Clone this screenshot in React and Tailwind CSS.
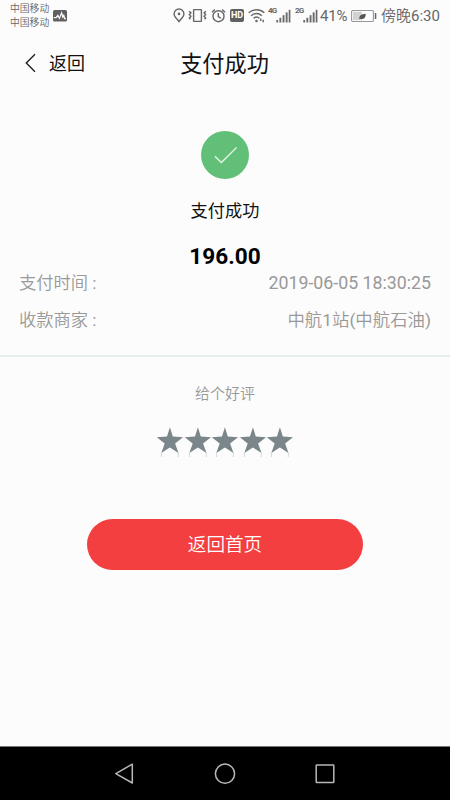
const details = [
  { label: '支付时间', value: '2019-06-05 18:30:25', size: 'text-[17.75px]' },
  { label: '收款商家', value: '中航1站(中航石油)', size: 'text-[17.4px]' },
]

// Chinese glyphs are set lighter than the digits around them
function MixedText({ text }) {
  return text.split(/([\u4e00-\u9fff]+)/).map((part, i) => (
    <span key={i} className={i % 2 ? 'font-[350]' : 'font-normal'}>
      {part}
    </span>
  ))
}

function SignalBars() {
  return (
    <svg className="w-[15px] h-[14px]" viewBox="0 0 15 14" fill="#6a6a6a">
      <rect x="0.3" y="11" width="1.8" height="2.5" />
      <rect x="3.4" y="8.8" width="1.9" height="4.7" />
      <rect x="6.6" y="6.2" width="1.9" height="7.3" />
      <rect x="9.7" y="3.4" width="1.9" height="10.1" />
      <rect x="12.7" y="0.8" width="1.7" height="12.7" />
    </svg>
  )
}

function StatusIcons() {
  return (
    <div className="flex items-center h-[31px]">
      {/* location */}
      <svg className="w-[12px] h-[15px]" viewBox="0 0 12 15" fill="none" stroke="#666" strokeWidth="1.4">
        <path d="M6 13.6C4.6 11.5 1.1 8.8 1.1 5.9a4.9 4.9 0 0 1 9.8 0C10.9 8.8 7.4 11.5 6 13.6Z" />
        <circle cx="6" cy="5.9" r="1.3" fill="#666" stroke="none" />
      </svg>
      {/* vibrate */}
      <svg className="w-[19px] h-[15px] ml-[3px]" viewBox="0 0 19 15" fill="none" stroke="#666" strokeWidth="1.4">
        <rect x="5.6" y="1.6" width="7.8" height="11.8" rx="0.4" />
        <path d="M1.2 3.2l1.7 1.7-1.5 1.7 1.5 1.7-1.5 1.7 1 1.2M17.8 3.2l-1.7 1.7 1.5 1.7-1.5 1.7 1.5 1.7-1 1.2" />
      </svg>
      {/* alarm */}
      <svg className="w-[15px] h-[15px] ml-[4px]" viewBox="0 0 15 15" fill="none" stroke="#666" strokeWidth="1.4">
        <circle cx="7.5" cy="8.2" r="5.5" />
        <path d="M7.3 5v3.5l2.5 1.6M0.9 4.2l3-2.7M14.1 4.2l-3-2.7" />
      </svg>
      <span className="ml-[4px] w-[14px] h-[13px] rounded-[2px] bg-[#606060] text-white text-[9px] leading-[13px] font-bold text-center">
        HD
      </span>
      {/* wifi */}
      <svg className="w-[18px] h-[15px] ml-[4px]" viewBox="0 0 18 15" fill="none" stroke="#6a6a6a" strokeWidth="1.5">
        <path d="M0.7 4.8a11.4 11.4 0 0 1 15.6 0M3.2 7.7a7.6 7.6 0 0 1 10.6 0M5.6 10.4a4.3 4.3 0 0 1 5.8 0" />
        <circle cx="8.5" cy="13" r="1.3" fill="#6a6a6a" stroke="none" />
        <path d="M12.7 12.9v-2.4M15.2 11.8v2.4" strokeWidth="1.5" />
      </svg>
      <span className="ml-[2px] w-[8px] h-[17px] text-[8px] leading-[8px] font-bold tracking-[-0.8px]">4G</span>
      <SignalBars />
      <span className="ml-[4px] w-[8px] h-[17px] text-[8px] leading-[8px] font-bold tracking-[-0.8px]">2G</span>
      <SignalBars />
      <span className="ml-[2px] w-[28px] text-[15px] leading-[18px] tracking-[-0.2px]">41%</span>
      {/* battery saver */}
      <svg className="w-[26px] h-[12px] ml-[3px]" viewBox="0 0 26 12">
        <rect x="0.6" y="0.4" width="21.8" height="11.2" rx="1.4" fill="#fdfdfd" stroke="#999" strokeWidth="1.1" />
        <rect x="2" y="1.8" width="9" height="8.4" fill="#d2d2d2" />
        <path d="M8.4 9.3c-.4-3.6 1.6-5.2 6.3-5.6.2 3.6-1.8 6-5.1 5Z" fill="#555" />
        <rect x="23.8" y="3" width="1.5" height="6" fill="#666" />
      </svg>
      <span className="ml-[4px] w-[60px] pt-px text-[15px] leading-[18px] whitespace-nowrap">
        <MixedText text="傍晚6:30" />
      </span>
    </div>
  )
}

function StatusBar() {
  return (
    <div className="flex justify-between h-8 pl-[10px] pr-[9px] text-[#666]">
      <div className="flex items-start">
        <div className="w-[43px] pt-[2px] text-[9.8px] leading-[14px] font-[350]">
          <div>中国移动</div>
          <div>中国移动</div>
        </div>
        <svg className="w-[14px] h-[12px] mt-[10px]" viewBox="0 0 14 12">
          <rect width="14" height="11.5" rx="1.5" fill="#606060" />
          <path d="M0.8 7.6h2.4l1.6-2.2 1.6 3 2.2-5.6 1.2 4.4 1-1.8 0.9 3.2h1.2" fill="none" stroke="#fff" strokeWidth="1.2" />
        </svg>
      </div>
      <StatusIcons />
    </div>
  )
}

function Star() {
  return (
    <svg className="w-[27.5px] h-[34px]" viewBox="0 0 27.5 34">
      <path
        d="M13.9 1.2l2.9 9.3 10.2.7-7.9 6.2 3.4 9.6-8.6-5.4-8.6 5.4 3.4-9.6-7.9-6.2 10.2-.7Z"
        fill="#7b868b"
      />
      <path d="M5.6 26q-.6 2.4.1 5M22.2 26q.6 2.4-.1 5" fill="none" stroke="#cfd4d6" strokeWidth="0.9" />
    </svg>
  )
}

function NavBar() {
  return (
    <div className="flex h-[54px] items-center justify-center gap-[76px] bg-black border-t border-[#777]">
      <svg className="w-6 h-6" viewBox="0 0 24 24" fill="none" stroke="#b8b8b8" strokeWidth="1.5" strokeLinejoin="round">
        <path d="M19.3 2.2v18.8L2.8 11.6Z" />
      </svg>
      <svg className="w-6 h-6" viewBox="0 0 24 24" fill="none" stroke="#b8b8b8" strokeWidth="1.5">
        <circle cx="12" cy="11.7" r="9.6" />
      </svg>
      <svg className="w-6 h-6" viewBox="0 0 24 24" fill="none" stroke="#b8b8b8" strokeWidth="1.5">
        <rect x="3.2" y="2.9" width="17.6" height="17.6" rx="0.5" />
      </svg>
    </div>
  )
}

export default function App() {
  return (
    <div className="flex flex-col w-[450px] h-[800px] bg-[#fcfcfc] overflow-hidden font-[Roboto,'Noto_Sans_CJK_SC',sans-serif]">
      <StatusBar />

      <header className="grid grid-cols-3 items-center h-[62px] pt-[2px] pl-6 text-[#111]">
        <button className="flex items-center text-[18px] leading-6">
          <svg className="w-[13px] h-[20px] mr-3 -mt-[3px]" viewBox="0 0 13 20" fill="none" stroke="#222" strokeWidth="1.4">
            <path d="M11 1.3L2.3 10l8.7 8.7" />
          </svg>
          返回
        </button>
        <h1 className="-ml-[25px] text-center text-[22.2px] leading-8 whitespace-nowrap">支付成功</h1>
      </header>

      <main className="flex flex-1 flex-col">
        <section className="flex flex-col items-center pt-[37px]">
          <div className="flex items-center justify-center w-12 h-12 rounded-full bg-[#62bf77]">
            <svg className="w-6 h-5" viewBox="0 0 24 20" fill="none" stroke="#e3f5e7" strokeWidth="1.4">
              <path d="M1.8 11.3l6.6 6.2L23.6 2.4" />
            </svg>
          </div>
          <p className="mt-[20px] text-[17.2px] leading-6 text-[#111]">支付成功</p>
          <p className="mt-[20px] text-[22.6px] leading-7 font-bold text-black">196.00</p>
        </section>

        <dl className="px-[19px] pb-[12px] -mt-px border-b-2 border-[#e5eeed] text-[17.3px] text-[#999] font-[350]">
          {details.map((row) => (
            <div key={row.label} className="flex justify-between h-[36.5px] leading-[26px]">
              <dt>
                {row.label}
                <span className="ml-1 font-normal">:</span>
              </dt>
              <dd className={row.size}>
                <MixedText text={row.value} />
              </dd>
            </div>
          ))}
        </dl>

        <section className="flex flex-col items-center pt-[25px]">
          <p className="text-[15px] leading-6 text-[#999] font-[350]">给个好评</p>
          <div className="flex mt-[20px]">
            {[1, 2, 3, 4, 5].map((n) => (
              <Star key={n} />
            ))}
          </div>
          <button className="mt-[59px] w-[276px] h-[51px] pt-[3px] rounded-full bg-[#f33f40] text-[18.6px] text-white font-[350]">
            返回首页
          </button>
        </section>
      </main>

      <NavBar />
    </div>
  )
}
